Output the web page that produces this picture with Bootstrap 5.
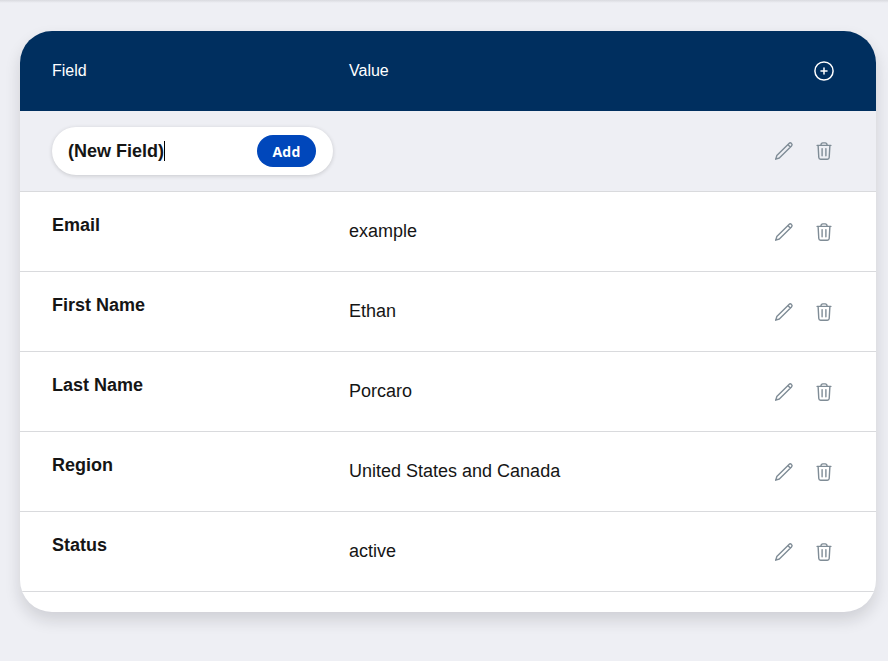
<!DOCTYPE html>
<html lang="en">
<head>
<meta charset="utf-8">
<meta name="viewport" content="width=device-width, initial-scale=1">
<title>Fields</title>
<link href="https://cdn.jsdelivr.net/npm/bootstrap@5.3.0/dist/css/bootstrap.min.css" rel="stylesheet">
<style>
body { background: #eeeff4; font-family: "Liberation Sans", Arial, sans-serif; color: #151515; font-size: 18px; line-height: 24px; }
.page { height: 661px; padding: 31px 12px 0 20px; background: linear-gradient(#d9dadf, #eeeff4) top / 100% 3px no-repeat; }
.panel { border-radius: 32px; padding-bottom: 20px; box-shadow: 0 8px 16px rgba(20,20,30,.14); }
.field-row { height: 80px; padding: 0 42px 0 32px; border-bottom: 1px solid #d9dadd; }
.head-row { background: #002f5f; color: #fff; font-size: 16px; border: 0; }
.new-row { height: 81px; background: #eeeff4; }
.name-col { width: 297px; }
.name-text { padding-bottom: 13px; }
.val-text { padding-bottom: 1px; }
.actions { gap: 20px; }
.tool { width: 20px; height: 20px; display: block; fill: none; stroke: #7f8c96; stroke-width: 1.4; stroke-linecap: round; stroke-linejoin: round; }
.field-row:not(.head-row):not(.new-row) .tool { margin-top: 1px; }
.head-row .tool { stroke: #fff; stroke-width: 1.5; }
.entry { width: 281px; height: 48px; padding: 0 17px 0 16px; box-shadow: 0 1px 4px rgba(0,0,0,.16); }
.caret { width: 1px; height: 20px; background: #000; }
.add-btn { width: 59px; height: 32px; padding: 2px 0 0; border: 0; background: #0047bb; color: #fff; font: 700 14px/30px "Open Sans", sans-serif; letter-spacing: .2px; }
</style>
</head>
<body>
<svg class="d-none">
  <symbol id="pencil" viewBox="0 0 20 20"><path d="M1.7 18.2 2.8 14.6 15 2.4a1.75 1.75 0 0 1 2.5 2.5L5.3 17Z M13.8 3.6l2.5 2.5"/></symbol>
  <symbol id="trash" viewBox="0 0 20 20"><path d="M3.1 4.4h13.8 M4.1 4.4l.7 12.1a1.8 1.8 0 0 0 1.8 1.7h6.8a1.8 1.8 0 0 0 1.8-1.7l.7-12.1 M7 4.1V3.6a1.7 1.7 0 0 1 1.7-1.7h2.6A1.7 1.7 0 0 1 13 3.6v.5 M8.1 7.6v7.2 M11.9 7.6v7.2"/></symbol>
</svg>
<main class="page">
  <section class="panel bg-white overflow-hidden">
    <div class="field-row head-row d-flex align-items-center">
      <div class="name-col val-text">Field</div><div class="flex-grow-1 val-text">Value</div>
      <svg class="tool" viewBox="0 0 20 20"><circle cx="10" cy="10" r="9.1"/><path d="M10 7v6M7 10h6"/></svg>
    </div>
    <div class="field-row new-row d-flex align-items-center">
      <div class="entry bg-white rounded-pill d-flex align-items-center fw-bold">
        <span>(New Field)</span><span class="caret"></span>
        <button class="add-btn rounded-pill ms-auto">Add</button>
      </div>
      <div class="actions d-flex ms-auto"><svg class="tool"><use href="#pencil"/></svg><svg class="tool"><use href="#trash"/></svg></div>
    </div>
    <div class="field-row d-flex align-items-center">
      <div class="name-col name-text fw-bold">Email</div><div class="val-text">example</div>
      <div class="actions d-flex ms-auto"><svg class="tool"><use href="#pencil"/></svg><svg class="tool"><use href="#trash"/></svg></div>
    </div>
    <div class="field-row d-flex align-items-center">
      <div class="name-col name-text fw-bold">First Name</div><div class="val-text">Ethan</div>
      <div class="actions d-flex ms-auto"><svg class="tool"><use href="#pencil"/></svg><svg class="tool"><use href="#trash"/></svg></div>
    </div>
    <div class="field-row d-flex align-items-center">
      <div class="name-col name-text fw-bold">Last Name</div><div class="val-text">Porcaro</div>
      <div class="actions d-flex ms-auto"><svg class="tool"><use href="#pencil"/></svg><svg class="tool"><use href="#trash"/></svg></div>
    </div>
    <div class="field-row d-flex align-items-center">
      <div class="name-col name-text fw-bold">Region</div><div class="val-text">United States and Canada</div>
      <div class="actions d-flex ms-auto"><svg class="tool"><use href="#pencil"/></svg><svg class="tool"><use href="#trash"/></svg></div>
    </div>
    <div class="field-row d-flex align-items-center">
      <div class="name-col name-text fw-bold">Status</div><div class="val-text">active</div>
      <div class="actions d-flex ms-auto"><svg class="tool"><use href="#pencil"/></svg><svg class="tool"><use href="#trash"/></svg></div>
    </div>
  </section>
</main>
<script src="https://cdn.jsdelivr.net/npm/bootstrap@5.3.0/dist/js/bootstrap.bundle.min.js"></script>
</body>
</html>
